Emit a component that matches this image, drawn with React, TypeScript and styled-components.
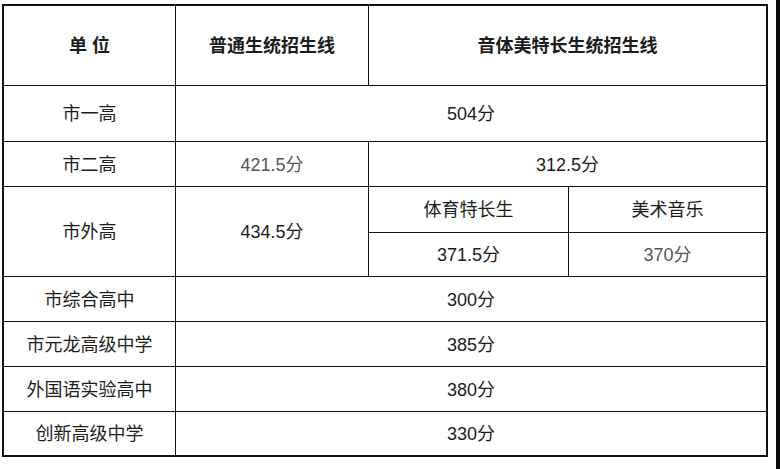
import React from 'react';
import styled, { createGlobalStyle } from 'styled-components';

const GlobalStyle = createGlobalStyle`
	html, body {
		margin: 0;
		padding: 0;
		background: #ffffff;
	}
`;

type Row = { school: string; score: string };

const commonRows: Row[] = [
	{ school: '市综合高中', score: '300分' },
	{ school: '市元龙高级中学', score: '385分' },
	{ school: '外国语实验高中', score: '380分' },
	{ school: '创新高级中学', score: '330分' },
];

const App: React.FunctionComponent = () => (
	<>
		<GlobalStyle />
		<Page>
			<Frame>
				<Grid>
					<Cell $head>{'单 位'}</Cell>
					<Cell $head>{'普通生统招生线'}</Cell>
					<Cell $head $col={'3 / 5'}>{'音体美特长生统招生线'}</Cell>

					<Cell>{'市一高'}</Cell>
					<Cell $col={'2 / 5'}>{'504分'}</Cell>

					<Cell>{'市二高'}</Cell>
					<Cell $muted>{'421.5分'}</Cell>
					<Cell $col={'3 / 5'}>{'312.5分'}</Cell>

					<Cell $row={'4 / 6'}>{'市外高'}</Cell>
					<Cell $row={'4 / 6'}>{'434.5分'}</Cell>
					<Cell>{'体育特长生'}</Cell>
					<Cell>{'美术音乐'}</Cell>
					<Cell>{'371.5分'}</Cell>
					<Cell $muted>{'370分'}</Cell>

					{commonRows.map(r => (
						<React.Fragment key={r.school}>
							<Cell>{r.school}</Cell>
							<Cell $col={'2 / 5'}>{r.score}</Cell>
						</React.Fragment>
					))}
				</Grid>
			</Frame>
			<Edge />
		</Page>
	</>
);

export default App;

const Page = styled.div`
	display: flex;
	width: 780px;
	height: 469px;
	overflow: hidden;
	background: #ffffff;
`;

const Frame = styled.div`
	padding: 4px 0 0 2px;
`;

const Grid = styled.div`
	display: grid;
	grid-template-columns: 171px 192px 199px 197px;
	grid-template-rows: 79px 55px 44px 45px 43px 44px 44px 44px 43px;
	gap: 1px;
	border: 2px solid #111111;
	background: #111111;
	width: 762px;
`;

const Cell = styled.div<{ $head?: boolean; $muted?: boolean; $col?: string; $row?: string }>`
	display: flex;
	align-items: center;
	justify-content: center;
	padding-bottom: 3px;
	background: #ffffff;
	grid-column: ${p => p.$col ?? 'auto'};
	grid-row: ${p => p.$row ?? 'auto'};
	font-family: 'Liberation Sans', 'Noto Sans CJK SC', sans-serif;
	font-size: 18px;
	font-weight: ${p => (p.$head ? 700 : 400)};
	color: ${p => (p.$muted ? '#555555' : '#1c1c1c')};
	white-space: nowrap;
`;

const Edge = styled.div`
	margin-left: auto;
	width: 4px;
	height: 100%;
	background: #0a0a0a;
`;
